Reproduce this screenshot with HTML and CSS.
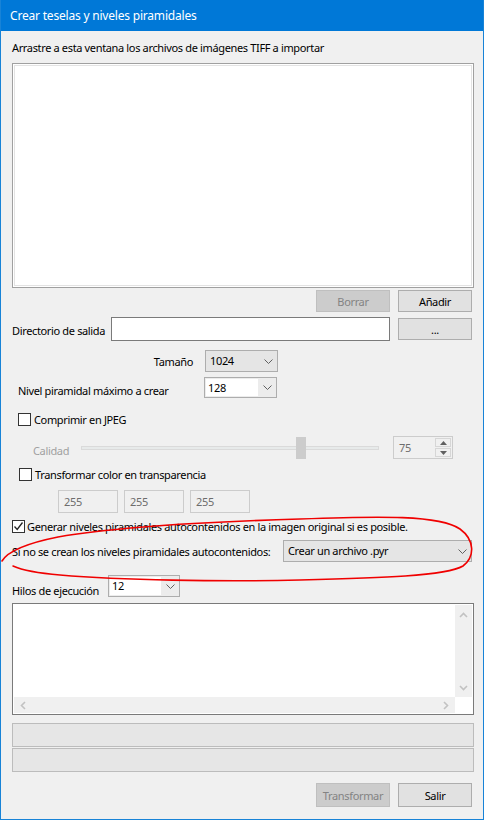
FILE: index.html
```html
<!DOCTYPE html>
<html>
<head>
    <title>Crear teselas y niveles piramidales</title>
    <link rel="stylesheet" href="styles.css">
</head>
<body>
    <div class="window">
        <div class="titlebar">Crear teselas y niveles piramidales</div>

        <div class="client">
            <div class="hint">Arrastre a esta ventana los archivos de imágenes TIFF a importar</div>
            <div class="filelist"></div>

            <div class="row row-buttons">
                <button class="btn" disabled>Borrar</button>
                <button class="btn">Añadir</button>
            </div>

            <div class="row row-dir">
                <span class="label dir-label">Directorio de salida</span>
                <div class="edit dir-edit"></div>
                <button class="btn btn-browse">...</button>
            </div>

            <div class="row row-size">
                <span class="label size-label">Tamaño</span>
                <div class="combo">
                    <span class="combo-value">1024</span>
                    <span class="combo-arrow"><svg width="9" height="5" viewBox="0 0 9 5"><path d="M0.5 0.5 L4.5 4.5 L8.5 0.5" fill="none" stroke="#606060"/></svg></span>
                </div>
            </div>

            <div class="row row-level">
                <span class="label level-label">Nivel piramidal máximo a crear</span>
                <div class="combo combo-edit">
                    <span class="combo-value">128</span>
                    <span class="combo-arrow"><svg width="9" height="5" viewBox="0 0 9 5"><path d="M0.5 0.5 L4.5 4.5 L8.5 0.5" fill="none" stroke="#606060"/></svg></span>
                </div>
            </div>

            <div class="row row-check jpeg">
                <span class="checkbox"></span>
                <span class="check-text">Comprimir en JPEG</span>
            </div>

            <div class="row row-quality">
                <span class="label quality-label">Calidad</span>
                <div class="slider">
                    <div class="slider-track"></div>
                    <div class="slider-thumb"></div>
                </div>
                <div class="spin">
                    <span class="spin-value">75</span>
                    <div class="spin-buttons">
                        <span class="spin-btn"><svg width="7" height="4" viewBox="0 0 7 4"><path d="M0 4 L3.5 0 L7 4 Z" fill="#606060"/></svg></span>
                        <span class="spin-btn"><svg width="7" height="4" viewBox="0 0 7 4"><path d="M0 0 L3.5 4 L7 0 Z" fill="#606060"/></svg></span>
                    </div>
                </div>
            </div>

            <div class="row row-check transp">
                <span class="checkbox"></span>
                <span class="check-text">Transformar color en transparencia</span>
            </div>

            <div class="row row-rgb">
                <div class="edit edit-disabled">255</div>
                <div class="edit edit-disabled">255</div>
                <div class="edit edit-disabled">255</div>
            </div>

            <div class="row row-check generate">
                <span class="checkbox checked"><svg width="11" height="11" viewBox="0 0 11 11"><path d="M1.5 5.5 L4.2 8.5 L9.5 1.5" fill="none" stroke="#222" stroke-width="1.3"/></svg></span>
                <span class="check-text">Generar niveles piramidales autocontenidos en la imagen original si es posible.</span>
            </div>

            <div class="row row-fallback">
                <span class="label fallback-label">Si no se crean los niveles piramidales autocontenidos:</span>
                <div class="combo combo-wide">
                    <span class="combo-value">Crear un archivo .pyr</span>
                    <span class="combo-arrow"><svg width="9" height="5" viewBox="0 0 9 5"><path d="M0.5 0.5 L4.5 4.5 L8.5 0.5" fill="none" stroke="#606060"/></svg></span>
                </div>
            </div>

            <div class="row row-threads">
                <span class="label threads-label">Hilos de ejecución</span>
                <div class="combo combo-edit combo-threads">
                    <span class="combo-value">12</span>
                    <span class="combo-arrow"><svg width="9" height="5" viewBox="0 0 9 5"><path d="M0.5 0.5 L4.5 4.5 L8.5 0.5" fill="none" stroke="#606060"/></svg></span>
                </div>
            </div>

            <div class="log">
                <div class="log-body"></div>
                <div class="vscroll">
                    <svg width="9" height="6" viewBox="0 0 9 6"><path d="M1 5 L4.5 1.5 L8 5" fill="none" stroke="#c2c2c2" stroke-width="1.6"/></svg>
                    <svg width="9" height="6" viewBox="0 0 9 6"><path d="M1 1 L4.5 4.5 L8 1" fill="none" stroke="#c2c2c2" stroke-width="1.6"/></svg>
                </div>
                <div class="hscroll">
                    <svg width="6" height="9" viewBox="0 0 6 9"><path d="M5 1 L1.5 4.5 L5 8" fill="none" stroke="#c2c2c2" stroke-width="1.6"/></svg>
                    <svg width="6" height="9" viewBox="0 0 6 9"><path d="M1 1 L4.5 4.5 L1 8" fill="none" stroke="#c2c2c2" stroke-width="1.6"/></svg>
                </div>
                <div class="corner"></div>
            </div>

            <div class="progress first"></div>
            <div class="progress"></div>

            <div class="row row-footer">
                <button class="btn btn-tall" disabled>Transformar</button>
                <button class="btn btn-tall">Salir</button>
            </div>
        </div>

        <!-- hand-drawn red mark over the pyramid options -->
        <svg class="annotation" width="484" height="820" viewBox="0 0 484 820">
            <path d="M2 561 C8 551 28 543 58 537 C110 528 200 522 300 519 C380 516 440 515 460 529 C475 540 475 557 463 566 C446 576 380 578 300 580 C220 582 120 580 60 575 C36 573 22 570 13 566" fill="none" stroke="#f00000" stroke-width="1.6" stroke-linecap="round"/>
        </svg>
    </div>
</body>
</html>
```

FILE: styles.css
```css
body {
    margin: 0;
    font-family: 'Noto Sans', 'Open Sans', sans-serif;
    font-size: 11px;
    letter-spacing: -0.35px;
    color: #000;
}

.window {
    position: relative;
    width: 484px;
    height: 820px;
    box-sizing: border-box;
    border: 1px solid #1883d7;
    border-top: none;
    background: #f0f0f0;
    display: flex;
    flex-direction: column;
}

.titlebar {
    height: 31px;
    line-height: 31px;
    padding-left: 9px;
    background: #0078d7;
    color: #fff;
    font-size: 12px;
    letter-spacing: -0.2px;
}

.client {
    flex: 1;
    padding: 0 9px 0 11px;
    display: flex;
    flex-direction: column;
}

.row {
    display: flex;
    align-items: center;
}

.label {
    line-height: 16px;
    white-space: nowrap;
}

.hint {
    margin-top: 9px;
    line-height: 16px;
}

.filelist {
    margin-top: 7px;
    height: 225px;
    box-sizing: border-box;
    border: 1px solid #a0a0a0;
    background: #fff;
    box-shadow: inset 0 0 0 1px #fff, inset 0 0 0 2px #e3e3e3;
}

/* buttons */
.btn {
    width: 74px;
    height: 22px;
    box-sizing: border-box;
    border: 1px solid #adadad;
    background: #e1e1e1;
    font: inherit;
    letter-spacing: inherit;
    color: #000;
    padding: 0;
}

.btn:disabled {
    background: #cccccc;
    border-color: #bfbfbf;
    color: #838383;
}

.btn-tall {
    height: 24px;
}

.row-buttons {
    margin-top: 2px;
    height: 22px;
    justify-content: flex-end;
    gap: 8px;
    padding-right: 2px;
}

.row-footer {
    margin-top: 11px;
    height: 24px;
    justify-content: flex-end;
    gap: 8px;
    padding-right: 2px;
}

/* edits */
.edit {
    height: 24px;
    box-sizing: border-box;
    border: 1px solid #7a7a7a;
    background: #fff;
}

.row-dir {
    margin-top: 5px;
    height: 24px;
}

.dir-label {
    width: 99px;
    padding-top: 3px;
}

.dir-edit {
    width: 279px;
}

.btn-browse {
    margin-left: 8px;
}

/* combos */
.combo {
    display: flex;
    align-items: center;
    width: 73px;
    height: 22px;
    box-sizing: border-box;
    border: 1px solid #adadad;
    background: #e5e5e5;
}

.combo-value {
    flex: 1;
    padding-left: 4px;
    line-height: 16px;
    align-self: stretch;
    display: flex;
    align-items: center;
}

.combo-arrow {
    width: 18px;
    align-self: stretch;
    display: flex;
    align-items: center;
    justify-content: center;
}

.combo-edit {
    background: #ececec;
}

.combo-edit .combo-value {
    background: #fff;
    padding-left: 2px;
    margin: 1px 0 1px 1px;
}

.row-size {
    margin-top: 9px;
    height: 22px;
}

.size-label {
    width: 181px;
    text-align: right;
    margin-right: 12px;
    padding-top: 2px;
}

.row-level {
    margin-top: 5px;
    height: 21px;
}

.row-level .combo {
    height: 21px;
}

.level-label {
    width: 186px;
    padding-left: 6px;
    padding-top: 6px;
}

/* checkboxes */
.checkbox {
    width: 13px;
    height: 13px;
    box-sizing: border-box;
    border: 1px solid #333;
    background: #fff;
    display: flex;
    align-items: center;
    justify-content: center;
}

.check-text {
    margin-left: 3px;
    line-height: 16px;
    white-space: nowrap;
}

.row-check {
    height: 15px;
}

.jpeg {
    margin-top: 14px;
    padding-left: 6px;
}

.transp {
    margin-top: 8px;
    padding-left: 7px;
}

.generate {
    margin-top: 6px;
}

.generate .check-text {
    margin-left: 2px;
    padding-top: 1px;
}

/* quality slider */
.row-quality {
    margin-top: 9px;
    height: 23px;
}

.quality-label {
    width: 48px;
    padding-left: 21px;
    padding-top: 6px;
    color: #a0a0a0;
}

.slider {
    position: relative;
    width: 298px;
    height: 22px;
    display: flex;
    align-items: center;
}

.slider-track {
    width: 100%;
    height: 4px;
    box-sizing: border-box;
    border: 1px solid #dadada;
    background: #e7eaea;
}

.slider-thumb {
    position: absolute;
    left: 215px;
    top: 0;
    width: 10px;
    height: 22px;
    background: #cccccc;
}

.spin {
    margin-left: 14px;
    width: 60px;
    height: 23px;
    box-sizing: border-box;
    border: 1px solid #cccccc;
    display: flex;
    align-items: center;
}

.spin-value {
    flex: 1;
    padding-left: 5px;
    color: #6d6d6d;
}

.spin-buttons {
    display: flex;
    flex-direction: column;
    gap: 1px;
    margin-right: 1px;
}

.spin-btn {
    width: 16px;
    height: 9px;
    box-sizing: border-box;
    border: 1px solid #d6d6d6;
    background: #f0f0f0;
    display: flex;
    align-items: center;
    justify-content: center;
}

/* rgb edits */
.row-rgb {
    margin-top: 8px;
    height: 23px;
    padding-left: 46px;
    gap: 6px;
}

.edit-disabled {
    width: 60px;
    height: 23px;
    border-color: #cccccc;
    background: #f0f0f0;
    color: #6d6d6d;
    padding-left: 5px;
    line-height: 21px;
}

/* fallback combo */
.row-fallback {
    margin-top: 6px;
    height: 22px;
}

.fallback-label {
    width: 271px;
    padding-top: 2px;
}

.combo-wide {
    width: 189px;
}

.row-threads {
    margin-top: 13px;
    height: 22px;
}

.threads-label {
    width: 96px;
    padding-top: 9px;
}

.combo-threads {
    width: 72px;
}

/* log */
.log {
    margin-top: 6px;
    height: 112px;
    box-sizing: border-box;
    border: 1px solid #7a7a7a;
    padding: 1px;
    background: #fff;
    display: grid;
    grid-template-columns: 1fr 17px;
    grid-template-rows: 1fr 16px;
}

.vscroll {
    background: #f0f0f0;
    display: flex;
    flex-direction: column;
    align-items: center;
    justify-content: space-between;
    padding: 7px 0 6px;
}

.hscroll {
    background: #f0f0f0;
    display: flex;
    align-items: center;
    justify-content: space-between;
    padding: 0 6px 0 6px;
}

.corner {
    background: #fff;
}

/* progress */
.progress {
    height: 24px;
    box-sizing: border-box;
    border: 1px solid #bcbcbc;
    background: #e6e6e6;
    margin-top: 1px;
}

.progress.first {
    margin-top: 8px;
}

/* annotation overlay */
.annotation {
    position: absolute;
    top: 0;
    left: -1px;
    pointer-events: none;
}
```
